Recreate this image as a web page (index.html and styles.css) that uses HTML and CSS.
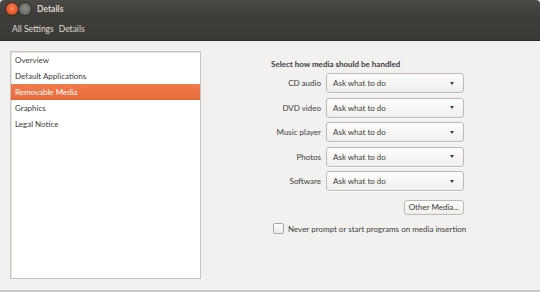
FILE: index.html
```html
<!DOCTYPE html>
<html>
<head>
<meta charset="utf-8">
<link rel="stylesheet" href="styles.css">
</head>
<body>
<div class="window">
  <div class="titlebar">
    <span class="wbtn close"></span>
    <span class="wbtn min"></span>
    <span class="title">Details</span>
  </div>
  <div class="toolbar">
    <span class="crumb">All Settings</span>
    <span class="crumb">Details</span>
  </div>
  <div class="content">
    <ul class="sidebar">
      <li>Overview</li>
      <li>Default Applications</li>
      <li class="selected">Removable Media</li>
      <li>Graphics</li>
      <li>Legal Notice</li>
    </ul>
    <div class="main">
      <div class="heading">Select how media should be handled</div>
      <div class="form">
        <span class="label">CD audio</span><div class="combo"><span>Ask what to do</span><span class="arrow"></span></div>
        <span class="label">DVD video</span><div class="combo"><span>Ask what to do</span><span class="arrow"></span></div>
        <span class="label">Music player</span><div class="combo"><span>Ask what to do</span><span class="arrow"></span></div>
        <span class="label">Photos</span><div class="combo"><span>Ask what to do</span><span class="arrow"></span></div>
        <span class="label">Software</span><div class="combo"><span>Ask what to do</span><span class="arrow"></span></div>
      </div>
      <div class="btnrow"><button class="button">Other Media...</button></div>
      <label class="check"><span class="box"></span><span>Never prompt or start programs on media insertion</span></label>
    </div>
  </div>
</div>
</body>
</html>
```
FILE: styles.css
```css
* { box-sizing: border-box; }
html, body { margin: 0; padding: 0; }
body {
  width: 540px;
  height: 292px;
  overflow: hidden;
  font-family: "Lato", "Open Sans", sans-serif;
  font-size: 8px;
  color: #3c3c3c;
  background: #3c3b37;
}
.window {
  height: 292px;
  display: flex;
  flex-direction: column;
  background: #f2f1f0;
  border-bottom: 2px solid #c9c7c2;
}
.titlebar {
  height: 17px;
  display: flex;
  align-items: center;
  padding-left: 6px;
  background: linear-gradient(#4a4945, #3d3c38);
  border-radius: 4px 4px 0 0;
}
.wbtn {
  width: 12px;
  height: 12px;
  border-radius: 50%;
}
.close {
  background: radial-gradient(circle at 50% 45%, #f48a5e 0, #e4572a 55%, #a8391a 100%);
  box-shadow: 0 0 0 1px #2d2c29;
}
.min {
  margin-left: 1px;
  background: radial-gradient(circle at 50% 45%, #8b8a85 0, #6d6c67 60%, #55544f 100%);
  box-shadow: 0 0 0 1px #2d2c29;
}
.title {
  margin-left: 6px;
  color: #dfdbd2;
  font-weight: bold;
  font-size: 8.5px;
}
.toolbar {
  height: 24px;
  display: flex;
  align-items: center;
  gap: 5px;
  padding-left: 12px;
  padding-top: 1px;
  background: linear-gradient(#3f3e3a, #3a3935);
  border-bottom: 1px solid #2b2a27;
}
.crumb {
  color: #dfdbd2;
  font-size: 8.5px;
}
.content {
  flex: 1;
  display: flex;
  padding: 10px 10px 10px 10px;
}
.sidebar {
  list-style: none;
  margin: 0;
  padding: 0;
  width: 191px;
  height: 228px;
  background: #fff;
  border: 1px solid #c6c4bf;
  box-shadow: inset 1px 1px 0 #e7e6e3;
}
.sidebar li {
  height: 16px;
  line-height: 16px;
  padding-left: 4px;
  color: #3c3c3c;
}
.sidebar li.selected {
  background: linear-gradient(#f07c4d, #e8693a);
  color: #fff;
}
.main {
  flex: 1;
  display: flex;
  flex-direction: column;
  padding-left: 70px;
  padding-top: 8px;
}
.heading {
  font-weight: bold;
  height: 11px;
  line-height: 11px;
  color: #3c3c3c;
}
.form {
  margin-top: 3px;
  display: grid;
  grid-template-columns: 50px 138px;
  column-gap: 5px;
  row-gap: 4.6px;
  align-items: center;
}
.label {
  text-align: right;
  white-space: nowrap;
  color: #3c3c3c;
}
.combo {
  height: 20px;
  display: flex;
  align-items: center;
  justify-content: space-between;
  padding: 0 9px 0 6px;
  border: 1px solid #bdbab4;
  border-radius: 3px;
  background: linear-gradient(#fdfdfc, #f0efed);
  box-shadow: 0 1px 0 rgba(255,255,255,0.8);
  color: #3c3c3c;
}
.arrow {
  width: 0;
  height: 0;
  border-left: 2.5px solid transparent;
  border-right: 2.5px solid transparent;
  border-top: 3px solid #3c3c3c;
}
.btnrow {
  display: flex;
  justify-content: flex-end;
  width: 193px;
  margin-top: 9px;
}
.button {
  height: 15px;
  padding: 0 4px;
  white-space: nowrap;
  font-family: inherit;
  font-size: 8px;
  line-height: 13px;
  color: #3c3c3c;
  border: 1px solid #bdbab4;
  border-radius: 3px;
  background: linear-gradient(#fdfdfc, #efeeec);
}
.check {
  display: flex;
  align-items: center;
  gap: 4px;
  margin-top: 8px;
  margin-left: 2px;
  white-space: nowrap;
  color: #3c3c3c;
}
.box {
  width: 11px;
  height: 11px;
  border: 1px solid #a9a6a0;
  border-radius: 2px;
  background: linear-gradient(#fdfdfc, #eeedeb);
}
```
